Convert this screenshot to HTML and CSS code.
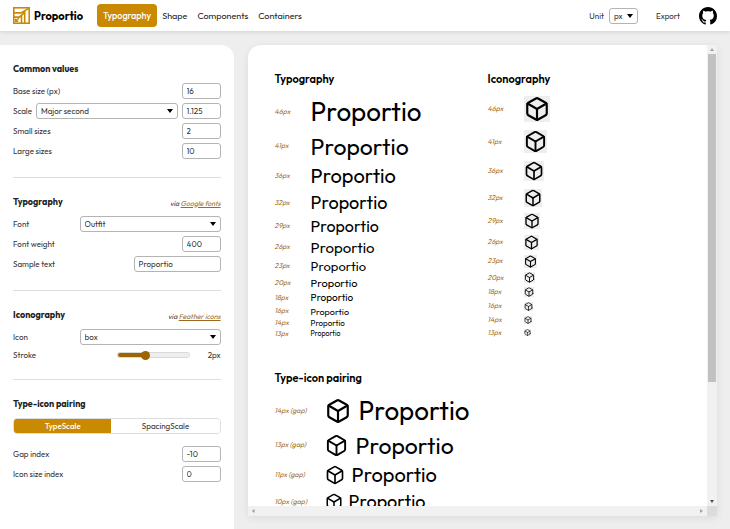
FILE: index.html
```
<!DOCTYPE html>
<html lang="en">
<head>
    <meta charset="UTF-8">
    <meta name="viewport" content="width=device-width, initial-scale=1.0">
    <title>Proportio</title>
    <link rel="stylesheet" href="styles.css">
</head>
<body>
    <svg class="sprite" aria-hidden="true">
        <symbol id="box" viewBox="0 0 24 24" fill="none" stroke="currentColor" stroke-width="2" stroke-linecap="round" stroke-linejoin="round">
            <path d="M21 16V8a2 2 0 0 0-1-1.73l-7-4a2 2 0 0 0-2 0l-7 4A2 2 0 0 0 3 8v8a2 2 0 0 0 1 1.73l7 4a2 2 0 0 0 2 0l7-4A2 2 0 0 0 21 16z"></path>
            <polyline points="3.27 6.96 12 12.01 20.73 6.96"></polyline>
            <line x1="12" y1="22.08" x2="12" y2="12"></line>
        </symbol>
    </svg>

    <header class="topbar">
        <a class="brand" href="#">
            <svg class="logo" viewBox="0 0 32 32" fill="none" stroke="#c98900">
                <rect x="1.5" y="1.5" width="29" height="29" stroke-width="3"></rect>
                <path d="M2 11H15L29 3M2 19H12L22 10V30M16 16V30" stroke-width="3"></path>
                <path d="M5 27L11 21M5 22V27H10" stroke-width="2.5"></path>
            </svg>
            Proportio
        </a>
        <nav class="nav">
            <a class="nav-link active" href="#typography">Typography</a>
            <a class="nav-link" href="#shape">Shape</a>
            <a class="nav-link" href="#components">Components</a>
            <a class="nav-link" href="#containers">Containers</a>
        </nav>
        <div class="actions">
            <label for="unit">Unit</label>
            <select class="unit" id="unit"><option>px</option><option>rem</option></select>
            <button class="export" type="button">Export</button>
            <a class="github" href="#" aria-label="GitHub">
                <svg viewBox="0 0 16 16" fill="#000"><path d="M8 0C3.58 0 0 3.58 0 8c0 3.54 2.29 6.53 5.47 7.59.4.07.55-.17.55-.38 0-.19-.01-.82-.01-1.49-2.01.37-2.53-.49-2.69-.94-.09-.23-.48-.94-.82-1.13-.28-.15-.68-.52-.01-.53.63-.01 1.08.58 1.23.82.72 1.21 1.87.87 2.33.66.07-.52.28-.87.51-1.07-1.78-.2-3.64-.89-3.64-3.95 0-.87.31-1.59.82-2.15-.08-.2-.36-1.02.08-2.12 0 0 .67-.21 2.2.82.64-.18 1.32-.27 2-.27s1.36.09 2 .27c1.53-1.04 2.2-.82 2.2-.82.44 1.1.16 1.92.08 2.12.51.56.82 1.27.82 2.15 0 3.07-1.87 3.75-3.65 3.95.29.25.54.73.54 1.48 0 1.07-.01 1.93-.01 2.2 0 .21.15.46.55.38A8.01 8.01 0 0 0 16 8c0-4.42-3.58-8-8-8z"></path></svg>
            </a>
        </div>
    </header>

    <main class="layout">
        <form class="sidebar">
            <section class="section">
                <h2 class="heading">Common values</h2>
                <div class="field">
                    <label for="baseSize">Base size (px)</label>
                    <input class="short" type="text" id="baseSize" value="16">
                </div>
                <div class="field">
                    <label for="scale">Scale</label>
                    <select class="grow" id="scale"><option>Major second</option></select>
                    <input class="short" type="text" id="scaleValue" aria-label="Scale value" value="1.125">
                </div>
                <div class="field">
                    <label for="smallSizes">Small sizes</label>
                    <input class="short" type="text" id="smallSizes" value="2">
                </div>
                <div class="field">
                    <label for="largeSizes">Large sizes</label>
                    <input class="short" type="text" id="largeSizes" value="10">
                </div>
            </section>

            <section class="section">
                <div class="section-head">
                    <h2 class="heading">Typography</h2>
                    <span class="via">via <a href="#">Google fonts</a></span>
                </div>
                <div class="field">
                    <label for="font">Font</label>
                    <select class="wide" id="font"><option>Outfit</option></select>
                </div>
                <div class="field">
                    <label for="fontWeight">Font weight</label>
                    <input class="short" type="text" id="fontWeight" value="400">
                </div>
                <div class="field">
                    <label for="sample">Sample text</label>
                    <input class="medium" type="text" id="sample" value="Proportio">
                </div>
            </section>

            <section class="section">
                <div class="section-head">
                    <h2 class="heading">Iconography</h2>
                    <span class="via">via <a href="#">Feather icons</a></span>
                </div>
                <div class="field">
                    <label for="icon">Icon</label>
                    <select class="wide" id="icon"><option>box</option></select>
                </div>
                <div class="field field-range">
                    <label for="stroke">Stroke</label>
                    <input type="range" id="stroke" min="0.5" max="4.5" step="0.25" value="2">
                    <output class="stroke-value" for="stroke">2px</output>
                </div>
            </section>

            <section class="section">
                <h2 class="heading">Type-icon pairing</h2>
                <div class="toggle">
                    <button class="toggle-btn selected" type="button">TypeScale</button>
                    <button class="toggle-btn" type="button">SpacingScale</button>
                </div>
                <div class="field">
                    <label for="gapIndex">Gap index</label>
                    <input class="short" type="text" id="gapIndex" value="-10">
                </div>
                <div class="field">
                    <label for="iconSizeIndex">Icon size index</label>
                    <input class="short" type="text" id="iconSizeIndex" value="0">
                </div>
            </section>
        </form>

        <div class="preview">
            <div class="canvas">
                <section class="type-scale">
                    <h2 class="title">Typography</h2>
                    <div class="row s46"><span class="size">46px</span><span class="sample">Proportio</span></div>
                    <div class="row s41"><span class="size">41px</span><span class="sample">Proportio</span></div>
                    <div class="row s36"><span class="size">36px</span><span class="sample">Proportio</span></div>
                    <div class="row s32"><span class="size">32px</span><span class="sample">Proportio</span></div>
                    <div class="row s29"><span class="size">29px</span><span class="sample">Proportio</span></div>
                    <div class="row s26"><span class="size">26px</span><span class="sample">Proportio</span></div>
                    <div class="row s23"><span class="size">23px</span><span class="sample">Proportio</span></div>
                    <div class="row s20"><span class="size">20px</span><span class="sample">Proportio</span></div>
                    <div class="row s18"><span class="size">18px</span><span class="sample">Proportio</span></div>
                    <div class="row s16"><span class="size">16px</span><span class="sample">Proportio</span></div>
                    <div class="row s14"><span class="size">14px</span><span class="sample">Proportio</span></div>
                    <div class="row s13"><span class="size">13px</span><span class="sample">Proportio</span></div>
                </section>

                <section class="icon-scale">
                    <h2 class="title">Iconography</h2>
                    <div class="row s46"><span class="size">46px</span><svg class="icon"><use href="#box"></use></svg></div>
                    <div class="row s41"><span class="size">41px</span><svg class="icon"><use href="#box"></use></svg></div>
                    <div class="row s36"><span class="size">36px</span><svg class="icon"><use href="#box"></use></svg></div>
                    <div class="row s32"><span class="size">32px</span><svg class="icon"><use href="#box"></use></svg></div>
                    <div class="row s29"><span class="size">29px</span><svg class="icon"><use href="#box"></use></svg></div>
                    <div class="row s26"><span class="size">26px</span><svg class="icon"><use href="#box"></use></svg></div>
                    <div class="row s23"><span class="size">23px</span><svg class="icon"><use href="#box"></use></svg></div>
                    <div class="row s20"><span class="size">20px</span><svg class="icon"><use href="#box"></use></svg></div>
                    <div class="row s18"><span class="size">18px</span><svg class="icon"><use href="#box"></use></svg></div>
                    <div class="row s16"><span class="size">16px</span><svg class="icon"><use href="#box"></use></svg></div>
                    <div class="row s14"><span class="size">14px</span><svg class="icon"><use href="#box"></use></svg></div>
                    <div class="row s13"><span class="size">13px</span><svg class="icon"><use href="#box"></use></svg></div>
                </section>

                <section class="pairing">
                    <h2 class="title">Type-icon pairing</h2>
                    <div class="row s46"><span class="size">14px (gap)</span><svg class="icon"><use href="#box"></use></svg><span class="sample">Proportio</span></div>
                    <div class="row s41"><span class="size">13px (gap)</span><svg class="icon"><use href="#box"></use></svg><span class="sample">Proportio</span></div>
                    <div class="row s36"><span class="size">11px (gap)</span><svg class="icon"><use href="#box"></use></svg><span class="sample">Proportio</span></div>
                    <div class="row s32"><span class="size">10px (gap)</span><svg class="icon"><use href="#box"></use></svg><span class="sample">Proportio</span></div>
                </section>
            </div>
            <div class="scroll-y"><i class="arrow up"></i><div class="thumb"></div><i class="arrow down"></i></div>
            <div class="scroll-x"><i class="arrow left"></i><i class="arrow right"></i></div>
            <div class="corner"></div>
        </div>
    </main>
</body>
</html>
```

FILE: styles.css
```
* { margin: 0; padding: 0; box-sizing: border-box; }
body {
    display: flex;
    flex-direction: column;
    height: 100vh;
    overflow: hidden;
    font-family: Outfit, Lato, sans-serif;
    font-size: 8px;
    line-height: 12px;
    color: #333;
    background: #eee;
}
a { color: inherit; }
button, input, select {
    font: inherit;
    color: inherit;
}
.sprite {
    position: absolute;
    width: 0;
    height: 0;
}

/* Top bar */
.topbar {
    display: flex;
    align-items: center;
    flex-shrink: 0;
    height: 31px;
    padding: 0 13px;
    background: white;
    box-shadow: 0 1px 4px rgba(0, 0, 0, 0.12);
}
.brand {
    display: flex;
    align-items: center;
    gap: 4px;
    margin-right: 14px;
    font-size: 11px;
    font-weight: 700;
    color: #000;
    text-decoration: none;
}
.logo {
    width: 17px;
    height: 17px;
}
.nav { display: flex; }
.nav-link {
    padding: 5px;
    border-radius: 4px;
    font-size: 9px;
    line-height: 13px;
    color: #222;
    text-decoration: none;
}
.nav-link.active {
    padding: 5px 6px;
    color: white;
    font-weight: 500;
    background: #c98900;
}
.actions {
    display: flex;
    align-items: center;
    margin-left: auto;
}
.unit {
    width: 29px;
    margin: 0 18px 0 5px;
}
.export {
    border: none;
    background: none;
    margin-right: 19px;
}
.github, .github svg {
    display: block;
    width: 18px;
    height: 18px;
}

/* Sidebar */
.layout {
    display: grid;
    grid-template-columns: 32% minmax(0, 1fr);
    gap: 14px;
    flex: 1;
    min-height: 0;
    padding-top: 14px;
}
.sidebar {
    padding: 0 13px;
    background: white;
    border-radius: 0 13px 0 0;
}
.section {
    display: flex;
    flex-direction: column;
    gap: 4px;
    padding: 17px 0 18px;
}
.section + .section { border-top: 1px solid #ddd; }
.section-head {
    display: flex;
    justify-content: space-between;
    align-items: center;
}
.heading {
    padding-bottom: 3px;
    font-size: 9px;
    line-height: 14px;
    font-weight: 700;
    color: #222;
}
.via {
    font-size: 7px;
    font-style: italic;
}
.via a, .size { color: #a06a1c; }
.field {
    display: flex;
    align-items: center;
    justify-content: space-between;
    gap: 4px;
    min-height: 16px;
}
input[type="text"], select {
    height: 16px;
    padding: 0 4px;
    border: 1px solid #b4b4b4;
    border-radius: 3px;
    background: white;
}
select {
    appearance: none;
    background: white url("data:image/svg+xml,%3Csvg xmlns='http://www.w3.org/2000/svg' viewBox='0 0 6 4'%3E%3Cpath d='M0 0h6L3 4z'/%3E%3C/svg%3E") no-repeat right 4px center / 6px 4px;
}
.short { width: 39px; }
.medium { width: 87px; }
.wide { width: 141px; }
.grow { flex: 1; }
.field-range { min-height: 12px; }
input[type="range"] {
    appearance: none;
    width: 71px;
    height: 4px;
    margin-left: auto;
    border-radius: 2px;
    background: linear-gradient(90deg, #9c6500 40%, #eee 40%);
    box-shadow: 0 0 0 1px rgba(0, 0, 0, 0.15);
}
input[type="range"]::-webkit-slider-thumb {
    appearance: none;
    width: 9px;
    height: 9px;
    border-radius: 50%;
    background: #9c6500;
}
.stroke-value {
    width: 28px;
    text-align: right;
}
.toggle {
    display: flex;
    height: 16px;
    margin-bottom: 8px;
    border: 1px solid #ddd;
    border-radius: 4px;
    overflow: hidden;
}
.toggle-btn {
    flex: 10;
    border: none;
    background: white;
}
.toggle-btn.selected {
    flex: 9;
    color: white;
    font-weight: 500;
    background: #c98900;
}

/* Preview */
.preview {
    display: grid;
    grid-template-columns: minmax(0, 1fr) 10px;
    grid-template-rows: minmax(0, 1fr) 10px;
    margin: 0 13px 13px 0;
    border-radius: 13px 0 0 0;
    background: white;
    box-shadow: 0 2px 8px rgba(0, 0, 0, 0.08);
    overflow: hidden;
}
.canvas {
    display: grid;
    grid-template-columns: 213px 1fr;
    align-content: start;
    row-gap: 31px;
    padding: 26px 27px 0;
    overflow: hidden;
    color: #000;
}
.title {
    margin-bottom: 7px;
    font-size: 11px;
    line-height: 16px;
    font-weight: 600;
}
.row {
    display: flex;
    align-items: center;
}
.size {
    flex-shrink: 0;
    width: 36px;
    font-size: 7px;
    font-style: italic;
    line-height: 10px;
}
.sample { line-height: 1; }
.icon {
    width: 1em;
    height: 1em;
}

.s46 { height: 36px; }
.s41 { height: 32px; }
.s36 { height: 28px; }
.s32 { height: 25px; }
.s29 { height: 22px; }
.s26 { height: 20px; }
.s23 { height: 18px; }
.s20 { height: 16px; }
.s18 { height: 14px; }
.s16 { height: 12px; }
.s14 { height: 11px; }
.s13 { height: 11px; }
.s46 .sample, .s46 .icon { font-size: 26px; }
.s41 .sample, .s41 .icon { font-size: 23px; }
.s36 .sample, .s36 .icon { font-size: 20px; }
.s32 .sample, .s32 .icon { font-size: 18px; }
.s29 .sample, .s29 .icon { font-size: 16px; }
.s26 .sample, .s26 .icon { font-size: 15px; }
.s23 .sample, .s23 .icon { font-size: 13px; }
.s20 .sample, .s20 .icon { font-size: 11px; }
.s18 .sample, .s18 .icon { font-size: 10px; }
.s16 .sample, .s16 .icon { font-size: 9px; }
.s14 .sample, .s14 .icon { font-size: 8px; }
.s13 .sample, .s13 .icon { font-size: 7px; }

.icon-scale .title { margin-bottom: 5px; }
.icon-scale .s46 { height: 34px; }
.icon-scale .s41 { height: 31px; }
.icon-scale .s20 { height: 15px; }
.icon-scale .s16 { height: 14px; }
.icon-scale .s14, .icon-scale .s13 { height: 13px; }
.icon-scale .icon { background: #eee; }

.pairing { grid-column: 1 / -1; }
.pairing .size { width: 50px; }
.pairing .sample { margin-left: 8px; }
.pairing .s36 .sample { margin-left: 7px; }
.pairing .s32 .sample { margin-left: 6px; }

/* Scrollbars */
.scroll-y, .scroll-x {
    display: flex;
    align-items: center;
    background: #f1f1f1;
}
.scroll-y {
    flex-direction: column;
    padding: 3px 0;
}
.scroll-x {
    justify-content: space-between;
    padding: 0 4px;
}
.thumb {
    width: 8px;
    height: 72%;
    margin: 3px 0 auto;
    background: #c1c1c1;
}
.corner { background: #dcdcdc; }
.arrow {
    width: 4px;
    height: 3px;
    background: #505050;
}
.up {
    background: #a3a3a3;
    clip-path: polygon(50% 0, 100% 100%, 0 100%);
}
.down { clip-path: polygon(0 0, 100% 0, 50% 100%); }
.left, .right {
    width: 3px;
    height: 4px;
    background: #a3a3a3;
}
.left { clip-path: polygon(100% 0, 100% 100%, 0 50%); }
.right { clip-path: polygon(0 0, 100% 50%, 0 100%); }
```
